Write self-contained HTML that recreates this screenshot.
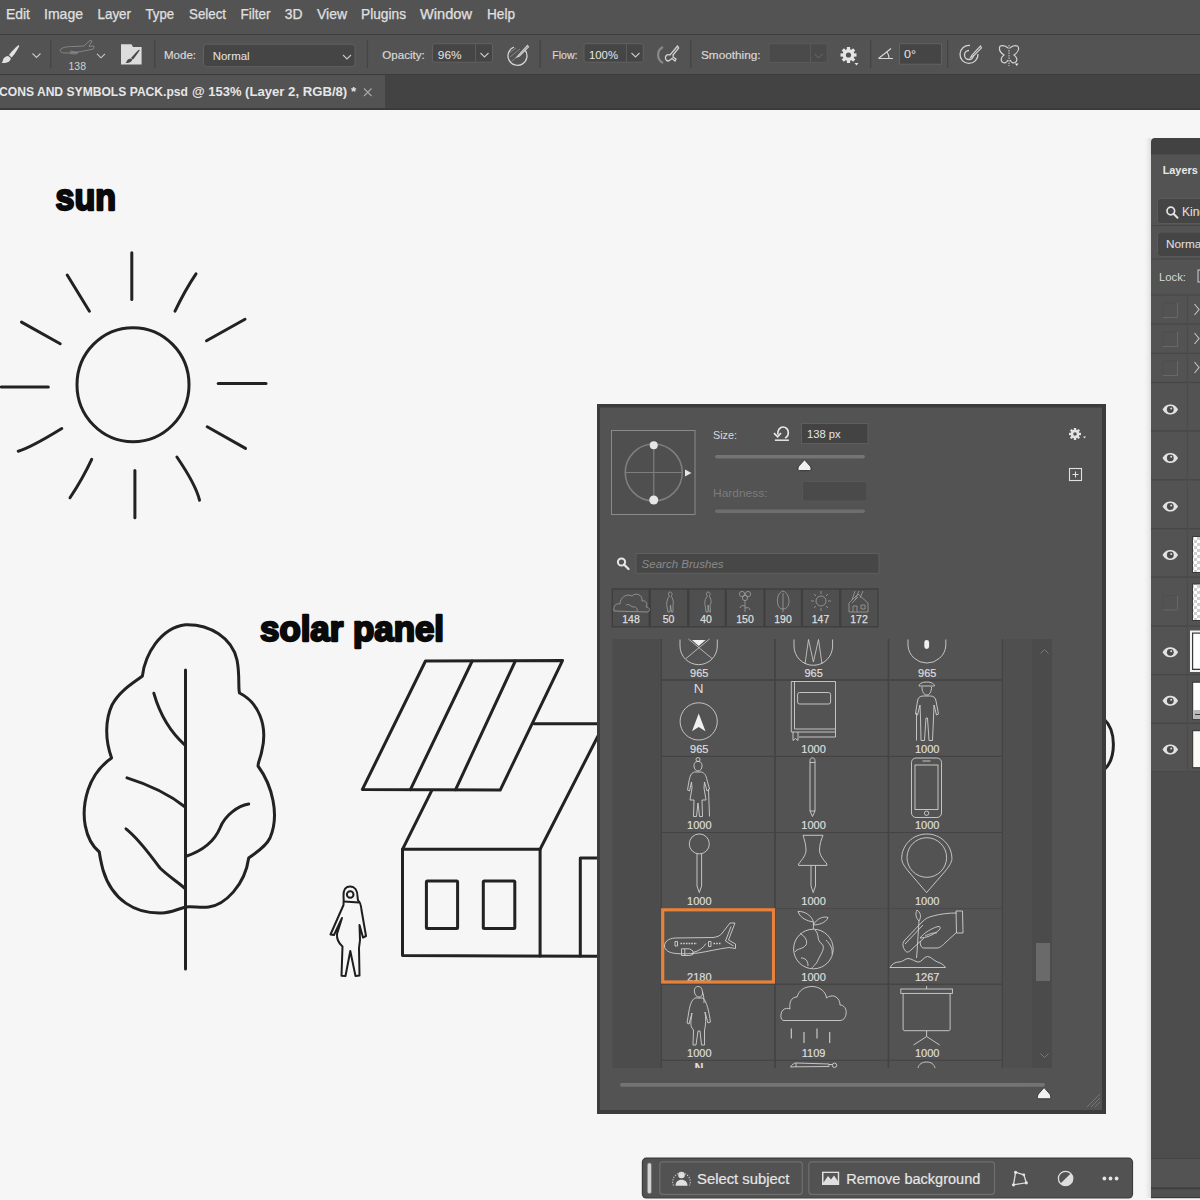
<!DOCTYPE html>
<html><head><meta charset="utf-8">
<style>
html,body{margin:0;padding:0;width:1200px;height:1200px;overflow:hidden;background:#f6f6f6}
svg{display:block}
text{font-family:"Liberation Sans",sans-serif}
</style></head><body>
<svg width="1200" height="1200" viewBox="0 0 1200 1200">
<rect x="0" y="0" width="1200" height="1200" fill="#f6f6f6"/>

<!-- ===== CANVAS DRAWINGS ===== -->
<g id="canvas" fill="none" stroke="#222222" stroke-width="3" stroke-linecap="round" stroke-linejoin="round">
  <!-- sun -->
  <ellipse cx="133" cy="384.7" rx="56" ry="57"/>
  <path d="M131.8 252.8 L131.8 299.5"/>
  <path d="M196 273.8 Q185 290 175 311.2"/>
  <path d="M245 319.3 L206.5 340.8"/>
  <path d="M218.2 383.5 L266 383.5"/>
  <path d="M207.2 426.7 L245.5 448.4"/>
  <path d="M176.9 457 Q196 485 199.5 500.2"/>
  <path d="M134.9 470.5 L134.9 517.7"/>
  <path d="M91.7 459.3 Q83 478 70 497.8"/>
  <path d="M61.8 428.5 Q30 448 18.2 451.2"/>
  <path d="M1.2 387 L48.3 387"/>
  <path d="M21.5 322.1 L60.2 343.8"/>
  <path d="M67.2 275 L89.4 311.2"/>
  <!-- tree -->
  <path d="M185.5 624.8 C210 624 232 638 237 660 C240 675 238 688 239.5 693 C258 702 268 725 262 750 C261 757 258 762 258 766 C272 785 280 815 270 838 C265 848 255 853 248.7 858 C245 885 225 905 208.7 907 C200 908 192 906 185.5 907 C175 910 170 913 162 913 C135 914 112 900 103 870 C101 862 100 858 99.3 852 C85 840 80 815 88 790 C93 775 103 764 111.6 758 C105 740 105 720 112 705 C120 690 135 682 142.4 676 C145 655 160 628 185.5 624.8 Z"/>
  <path d="M185.5 670 L185.5 969"/>
  <path d="M153.8 693.2 C160 715 170 732 185.5 745.6"/>
  <path d="M127 777.9 C150 785 170 795 185.5 807.2"/>
  <path d="M126 828.8 C140 840 150 855 160 868 C168 876 178 882 185.5 888.8"/>
  <path d="M185.5 856.5 C205 850 215 840 220 828 C225 815 238 806 248.7 804.1"/>
  <!-- solar panel -->
  <path d="M425.5 661 L562.6 660.4 L500.2 790.1 L362.3 789.6 Z"/>
  <path d="M472.2 661 L410.4 789.6"/>
  <path d="M515.3 661 L455.6 789.6"/>
  <!-- house -->
  <path d="M431.7 790.7 L402.5 849.3 L540.1 849.3 L598 736"/>
  <path d="M534.3 723.7 L598 723.7"/>
  <path d="M402.5 849.3 L402.5 955.5 L598 956.3"/>
  <path d="M540.1 849.3 L540.1 956"/>
  <path d="M598 858 L580.3 858 L580.3 956"/>
  <rect x="426.4" y="881.1" width="31.2" height="47.5" rx="1"/>
  <rect x="483.3" y="881.1" width="31.5" height="47.5" rx="1"/>
  <!-- arc right of panel -->
  <path d="M1104 719 C1116 730 1117 758 1104 770"/>
</g>
<g fill="none" stroke="#1e1e1e" stroke-width="2" stroke-linejoin="round">
  <!-- person -->
  <path d="M350 886.5 C355 886.5 357.5 891 357.5 896.5 L358 900.5 C360.5 902 361 905 361.5 910 L366 936 L363 937.5 L359.5 925 L360 940 L359 948 L359.5 975.5 L355.5 976 L350.3 951 L345.5 976 L341.5 975.7 L342.5 946.5 C338.5 943 336.5 940 337 934 L342 918 L334 935 L330.5 934.5 L343.5 905 C343.5 902 344 900 343.5 896.5 C343 890 345.5 886.5 350 886.5 Z"/>
  <circle cx="350.2" cy="894.5" r="3.3"/>
  <path d="M344 901.5 L359 902.5"/>
</g>
<text x="55.5" y="210.3" font-size="36.5" font-weight="bold" fill="#0a0a0a" textLength="60.5" lengthAdjust="spacingAndGlyphs" stroke="#0a0a0a" stroke-width="2.3" stroke-linejoin="round">sun</text>
<text x="260" y="640.6" font-size="35" font-weight="bold" fill="#0a0a0a" textLength="184" lengthAdjust="spacingAndGlyphs" stroke="#0a0a0a" stroke-width="2.3" stroke-linejoin="round">solar panel</text>

<!-- ===== MENU BAR ===== -->
<rect x="0" y="0" width="1200" height="34" fill="#535353"/>
<rect x="0" y="34" width="1200" height="1" fill="#3d3d3d"/>
<g fill="#e0e0e0" font-size="14.5" stroke="#e0e0e0" stroke-width="0.25">
  <text x="6" y="19.1" textLength="24" lengthAdjust="spacingAndGlyphs">Edit</text>
  <text x="44" y="19.1" textLength="39" lengthAdjust="spacingAndGlyphs">Image</text>
  <text x="97.5" y="19.1" textLength="33.5" lengthAdjust="spacingAndGlyphs">Layer</text>
  <text x="145.5" y="19.1" textLength="28.5" lengthAdjust="spacingAndGlyphs">Type</text>
  <text x="189" y="19.1" textLength="37" lengthAdjust="spacingAndGlyphs">Select</text>
  <text x="240.5" y="19.1" textLength="30" lengthAdjust="spacingAndGlyphs">Filter</text>
  <text x="284.7" y="19.1" textLength="17.8" lengthAdjust="spacingAndGlyphs">3D</text>
  <text x="317" y="19.1" textLength="30" lengthAdjust="spacingAndGlyphs">View</text>
  <text x="361" y="19.1" textLength="45" lengthAdjust="spacingAndGlyphs">Plugins</text>
  <text x="420" y="19.1" textLength="52" lengthAdjust="spacingAndGlyphs">Window</text>
  <text x="487" y="19.1" textLength="28" lengthAdjust="spacingAndGlyphs">Help</text>
</g>

<!-- ===== OPTIONS BAR ===== -->
<rect x="0" y="35" width="1200" height="39" fill="#535353"/>
<rect x="0" y="74" width="1200" height="1" fill="#3b3b3b"/>
<g id="opts">
  <!-- separators -->
  <g fill="#444444">
    <rect x="50" y="40" width="1.3" height="28"/>
    <rect x="154.2" y="40" width="1.3" height="28"/>
    <rect x="366.8" y="40" width="1.3" height="28"/>
    <rect x="539.5" y="40" width="1.3" height="28"/>
    <rect x="690.2" y="40" width="1.3" height="28"/>
    <rect x="870" y="40" width="1.3" height="28"/>
    <rect x="947" y="40" width="1.3" height="28"/>
  </g>
  <!-- brush tool icon -->
  <path d="M18.5 45 C16 47 11 52 9 55 L11.5 57.5 C14 55.5 17.5 49.5 19.3 46 Z" fill="#e2e2e2"/>
  <path d="M8 56 C5 56.5 3.5 58 3 60 C2.7 61.5 2.2 62.5 1.5 63 C4.5 63.3 8.5 62.5 10 60.5 C10.8 59.5 10.8 58 10.2 57.5 Z" fill="#e2e2e2"/>
  <!-- airplane brush thumb -->
  <g fill="none" stroke="#8a8a8a" stroke-width="0.9">
    <path d="M60 50 C62 47 68 46.5 74 46.5 L84 46 L90 40.5 L92 41 L89 46.5 L94 46 L93.5 49 L86 50.5 C80 52 72 53 66 53 C62 53 60 52 60 50 Z"/>
    <path d="M70 51 L78 52.5 L76 54 L70 53.5"/>
  </g>
  <text x="68.5" y="70.3" font-size="10.5" fill="#d0d0d0" textLength="17.5" lengthAdjust="spacingAndGlyphs">138</text>
  <!-- folder brush icon -->
  <path d="M121 44.3 L131.5 44.3 L133 47 L141.6 47 L141.6 64.6 L121 64.6 Z" fill="#dcdcdc"/>
  <path d="M139 49.5 C137 51.5 133 55.5 131 58 L132.8 59.7 C135 57.5 138.5 52 139.8 50.2 Z" fill="#4a4a4a"/>
  <path d="M130.3 58.6 C128.3 59 127.2 60 126.8 61.2 C126.5 62 126 62.6 125.5 63 C127.8 63.2 130.5 62.5 131.6 61 C132.2 60.3 132.1 59.5 131.8 59.2 Z" fill="#4a4a4a"/>
  <!-- text labels -->
  <g fill="#d8d8d8" font-size="11.8" stroke="#d8d8d8" stroke-width="0.2">
    <text x="164" y="59" textLength="32" lengthAdjust="spacingAndGlyphs">Mode:</text>
    <text x="382.3" y="58.7" textLength="42.4" lengthAdjust="spacingAndGlyphs">Opacity:</text>
    <text x="552.3" y="58.7" textLength="25.2" lengthAdjust="spacingAndGlyphs">Flow:</text>
    <text x="701" y="58.7" textLength="59.5" lengthAdjust="spacingAndGlyphs">Smoothing:</text>
  </g>
  <!-- mode dropdown -->
  <rect x="203.5" y="44.2" width="151.5" height="22.5" rx="3" fill="#454545" stroke="#616161" stroke-width="1"/>
  <text x="212.7" y="59.7" font-size="11.8" fill="#e6e6e6" textLength="37" lengthAdjust="spacingAndGlyphs">Normal</text>
  <!-- opacity input -->
  <rect x="432.5" y="43.7" width="60" height="18.5" rx="2" fill="#454545" stroke="#616161" stroke-width="1"/>
  <rect x="475" y="44.2" width="1" height="17.5" fill="#5c5c5c"/>
  <text x="437.8" y="58.5" font-size="11.8" fill="#e6e6e6" textLength="23.7" lengthAdjust="spacingAndGlyphs">96%</text>
  <!-- flow input -->
  <rect x="584" y="43.7" width="59.2" height="18.5" rx="2" fill="#454545" stroke="#616161" stroke-width="1"/>
  <rect x="626" y="44.2" width="1" height="17.5" fill="#5c5c5c"/>
  <text x="589" y="58.5" font-size="11.8" fill="#e6e6e6" textLength="29" lengthAdjust="spacingAndGlyphs">100%</text>
  <!-- smoothing input (disabled) -->
  <rect x="769" y="43.7" width="58.2" height="18.8" rx="2" fill="#4a4a4a" stroke="#595959" stroke-width="1"/>
  <rect x="810" y="44.2" width="1" height="17.8" fill="#595959"/>
  <path d="M814.5 54 L818.5 58 L822.5 54" fill="none" stroke="#6a6a6a" stroke-width="1"/>
  <!-- pressure opacity icon -->
  <g fill="none" stroke="#d2d2d2" stroke-width="1.3">
    <path d="M525 50 A9.5 9.5 0 1 1 514 47"/>
    <path d="M510 57 L520 49 M512 61 L523 52 M509 53 L516 48" stroke-width="0.7" stroke="#9a9a9a"/>
    <path d="M527.5 45.5 L519 54.5 L517 57 L519.5 56 L528.5 47 Z" stroke-width="1.1"/>
  </g>
  <!-- airbrush icon -->
  <g fill="none" stroke="#d2d2d2" stroke-width="1.3">
    <path d="M663 47 A9 9 0 0 0 663 63" stroke="#8a8a8a" stroke-width="2.2"/>
    <path d="M677.5 46 L670 55 C668 54 666 55 665.5 57 C665 59 666.5 61 668.5 61 L672 58.5 L675 61 L676 59 L673 57 C673.5 56 673.5 55.5 673 55 L678.7 48 Z"/>
  </g>
  <!-- gear icon -->
  <g transform="translate(848.5 55)">
    <circle r="6" fill="#e4e4e4"/>
    <g fill="#e4e4e4">
      <rect x="-1.6" y="-8" width="3.2" height="16"/>
      <rect x="-1.6" y="-8" width="3.2" height="16" transform="rotate(45)"/>
      <rect x="-1.6" y="-8" width="3.2" height="16" transform="rotate(90)"/>
      <rect x="-1.6" y="-8" width="3.2" height="16" transform="rotate(135)"/>
    </g>
    <circle r="2.6" fill="#535353"/>
  </g>
  <path d="M854.5 63 L858.5 63 L856.5 65.5 Z" fill="#e4e4e4"/>
  <!-- angle icon -->
  <path d="M878.5 58.5 L893 58.5 M878.5 58.5 L891 48.5 M887 52 C888.5 54 889 56 889 58.5" fill="none" stroke="#d8d8d8" stroke-width="1.2"/>
  <!-- angle input -->
  <rect x="899.5" y="43.7" width="42" height="20.5" fill="#454545" stroke="#616161" stroke-width="1"/>
  <text x="904" y="58.3" font-size="11.8" fill="#e6e6e6" textLength="12" lengthAdjust="spacingAndGlyphs">0°</text>
  <!-- target pen icon -->
  <g fill="none" stroke="#d2d2d2" stroke-width="1.3">
    <path d="M978 54 A9 9 0 1 1 970 45.5"/>
    <path d="M973.5 55 A4.5 4.5 0 1 1 969 50.5"/>
    <path d="M980.5 46 L972 55 L970.5 57.5 L973 56.5 L981.5 48 Z" stroke-width="1.1"/>
  </g>
  <!-- butterfly symmetry icon -->
  <g fill="none" stroke="#d2d2d2" stroke-width="1.2">
    <path d="M1008 48 C1005 45 1000 45 999.5 47.5 C999 50 1001 53 1004 55 C1001 57 1000 61 1003 62.5 C1005 63.5 1007 62 1008 60"/>
    <path d="M1010 48 C1013 45 1018 45 1018.5 47.5 C1019 50 1017 53 1014 55 C1017 57 1018 61 1015 62.5 C1013 63.5 1011 62 1010 60"/>
    <path d="M1009 45 L1009 66" stroke-dasharray="1.5 1" stroke-width="1"/>
  </g>
  <path d="M1015 63.5 L1018.5 63.5 L1016.7 66 Z" fill="#e4e4e4"/>
  <g fill="none" stroke="#c8c8c8" stroke-width="1.1">
    <path d="M32.5 53.5 L36.5 57.5 L40.5 53.5"/>
    <path d="M97 53.8 L101 57.8 L105 53.8"/>
    <path d="M343 55 L347 59 L351 55"/>
    <path d="M480.5 53 L484.5 57 L488.5 53"/>
    <path d="M631.5 53 L635.5 57 L639.5 53"/>
  </g>
</g>

<!-- ===== TAB BAR ===== -->
<rect x="0" y="75" width="1200" height="33" fill="#434343"/>
<rect x="0" y="75" width="385" height="33" fill="#535353"/>
<rect x="0" y="108" width="1200" height="2" fill="#3a3a3a"/>
<g font-size="13.5" font-weight="bold" fill="#e6e6e6">
<text x="-1" y="96" textLength="189" lengthAdjust="spacingAndGlyphs">CONS AND SYMBOLS PACK.psd</text>
<text x="192" y="96" textLength="49.5" lengthAdjust="spacingAndGlyphs">@ 153%</text>
<text x="245" y="96" textLength="111" lengthAdjust="spacingAndGlyphs">(Layer 2, RGB/8) *</text>
</g>
<path d="M364 88.5 L371.5 96 M371.5 88.5 L364 96" stroke="#a8a8a8" stroke-width="1.1"/>

<!-- ===== BRUSH PANEL ===== -->
<rect x="597" y="404" width="509" height="710" fill="#3c3c3c"/>
<rect x="600" y="407.5" width="502" height="702.5" fill="#535353"/>
<g id="bp">
  <!-- preview -->
  <rect x="611.5" y="430.5" width="83.5" height="84" fill="#4f4f4f" stroke="#8a8a8a" stroke-width="1"/>
  <g fill="none" stroke="#7e7e7e" stroke-width="1.6">
    <circle cx="653.75" cy="472.5" r="28.5"/>
    <path d="M653.75 445 L653.75 500 M625.3 472.5 L682.2 472.5" stroke-width="1.2"/>
  </g>
  <circle cx="653.75" cy="445.3" r="4" fill="#e6e6e6"/>
  <circle cx="653.75" cy="500" r="4.5" fill="#e6e6e6"/>
  <path d="M685 469.5 L691.5 473 L685 476.5 Z" fill="#e6e6e6"/>
  <!-- size -->
  <text x="713" y="438.8" font-size="11.3" fill="#d8d8d8" textLength="24" lengthAdjust="spacingAndGlyphs">Size:</text>
  <g fill="none" stroke="#e8e8e8" stroke-width="1.7">
    <path d="M777.8 434.5 C777.5 430 780 427 783 427 C786 427 788.3 429.5 788.3 432.5 C788.3 435.3 786.8 437.3 785 438"/>
    <path d="M774 433.2 L777.6 436.8 L781 433" stroke-linejoin="miter"/>
    <path d="M774.9 440.2 L788.9 440.2" stroke-width="1.5"/>
  </g>
  <rect x="801.5" y="423.5" width="66.5" height="20" fill="#434343" stroke="#5e5e5e" stroke-width="1"/>
  <text x="807" y="438.3" font-size="11.3" fill="#e6e6e6" textLength="33.7" lengthAdjust="spacingAndGlyphs">138 px</text>
  <rect x="715" y="455" width="150" height="3.6" rx="1.8" fill="#747474"/>
  <path d="M804.5 459.8 L809.9 465.8 Q811 467 811 468.2 L811 469.3 Q811 470.6 809.6 470.6 L799.4 470.6 Q798 470.6 798 469.3 L798 468.2 Q798 467 799.1 465.8 Z" fill="#f0f0f0" stroke="#2c2c2c" stroke-width="0.9"/>
  <!-- hardness -->
  <text x="713" y="497" font-size="11.3" fill="#7c7c7c" textLength="54.5" lengthAdjust="spacingAndGlyphs">Hardness:</text>
  <rect x="802.5" y="481.5" width="64.5" height="19.5" fill="#4a4a4a" stroke="#575757" stroke-width="1"/>
  <rect x="715" y="509.5" width="150" height="3.6" rx="1.8" fill="#6e6e6e"/>
  <!-- gear + new -->
  <g transform="translate(1075 434)">
    <circle r="4.3" fill="#e4e4e4"/>
    <g fill="#e4e4e4">
      <rect x="-1.2" y="-6" width="2.4" height="12"/>
      <rect x="-1.2" y="-6" width="2.4" height="12" transform="rotate(45)"/>
      <rect x="-1.2" y="-6" width="2.4" height="12" transform="rotate(90)"/>
      <rect x="-1.2" y="-6" width="2.4" height="12" transform="rotate(135)"/>
    </g>
    <circle r="1.8" fill="#535353"/>
  </g>
  <path d="M1083 436.5 L1086 436.5 L1084.5 438.5 Z" fill="#e4e4e4"/>
  <rect x="1069.5" y="468.5" width="12" height="12" fill="none" stroke="#e0e0e0" stroke-width="1.1"/>
  <path d="M1075.5 471.5 L1075.5 477.5 M1072.5 474.5 L1078.5 474.5" stroke="#e0e0e0" stroke-width="1.1"/>
  <!-- search -->
  <circle cx="621.5" cy="562" r="3.6" fill="none" stroke="#e6e6e6" stroke-width="2"/>
  <path d="M624 564.5 L628.5 569" stroke="#e6e6e6" stroke-width="2.3" stroke-linecap="round"/>
  <rect x="636" y="553.5" width="243" height="19.8" fill="#474747" stroke="#5e5e5e" stroke-width="1"/>
  <text x="641.6" y="567.8" font-size="11.3" font-style="italic" fill="#8a8a8a" textLength="82" lengthAdjust="spacingAndGlyphs">Search Brushes</text>
  <!-- recent strip -->
  <rect x="611.6" y="588.3" width="267" height="39.2" fill="#3f3f3f"/>
  <g fill="#4f4f4f">
    <rect x="613" y="589.8" width="35.5" height="36.3"/>
    <rect x="651" y="589.8" width="36" height="36.3"/>
    <rect x="689.5" y="589.8" width="35.2" height="36.3"/>
    <rect x="727" y="589.8" width="36.3" height="36.3"/>
    <rect x="765.5" y="589.8" width="35.3" height="36.3"/>
    <rect x="803" y="589.8" width="36" height="36.3"/>
    <rect x="841.3" y="589.8" width="36" height="36.3"/>
  </g>
  <g fill="#dedede" font-size="10.5" text-anchor="middle" stroke="#dedede" stroke-width="0.25">
    <text x="631" y="623.4">148</text>
    <text x="668.5" y="623.4">50</text>
    <text x="706" y="623.4">40</text>
    <text x="745" y="623.4">150</text>
    <text x="783" y="623.4">190</text>
    <text x="820.5" y="623.4">147</text>
    <text x="859" y="623.4">172</text>
  </g>
  <!-- strip icons -->
  <g fill="none" stroke="#a0a0a0" stroke-width="0.8">
    <path d="M614 611 C613 606 616 603 620 604 C620 598 626 593 632 596 C636 592 643 595 642 601 C646 600 648 604 646 607 C650 607 650 611 648 612 Z"/>
    <path d="M626 605 C628 604 631 605 632 607 C636 606 638 609 637 611"/>
    <path d="M670 592 C668 592 668 595 669.5 596 C667 598 666 604 667 607 L668 612 L670 612 L670.5 605 L671.5 612 L673 612 L673 605 C674 603 673 598 671 596 C673 595 672 592 670 592 Z"/>
    <path d="M708 592 C706 592 706 595 707.5 596 C705 598 704 604 705.5 607 L706 612 L708 612 L708 605 L709 612 L710.5 612 L710 605 C712 603 711 598 709 596 C711 595 710 592 708 592 Z"/>
    <circle cx="742" cy="594" r="2.6"/><circle cx="748" cy="594" r="2.6"/><circle cx="745" cy="598" r="2.6"/>
    <path d="M745 600 L745 612 M745 606 C742 605 740 606 740 608 M745 608 C748 607 750 608 750 610"/>
    <path d="M783 591 C779 592 777 597 777.5 602 C778 607 780 609 783 609 C786 609 788.5 607 789 602 C789 597 787 592 783 591 Z M783 593 L783 612"/>
    <circle cx="821" cy="601" r="5"/>
    <path d="M821 591 L821 594 M821 608 L821 611 M811 601 L814 601 M828 601 L831 601 M814 594 L816 596 M826 606 L828 608 M828 594 L826 596 M814 608 L816 606"/>
    <path d="M849 612 L849 603 L858 594 L868 603 L868 612 Z M852 603 L858 597 M855 591 L852 600 M859 591 L855 600 M863 591 L860 598 M853 612 L853 606 L857 606 L857 612 M861 605 L865 605 L865 609 L861 609 Z"/>
  </g>
  <!-- ===== BRUSH GRID ===== -->
  <rect x="612.5" y="639" width="439.5" height="429" fill="#4c4c4c"/>
  <rect x="1002.5" y="639" width="30" height="429" fill="#4f4f4f"/>
  <rect x="1032.5" y="639" width="19.5" height="429" fill="#4b4b4b"/>
  <rect x="660.8" y="639" width="342" height="429" fill="#434343"/>
  <g fill="#535353">
    <!-- rows: -1..5 -->
    <rect x="662" y="639" width="112.2" height="40.2"/>
    <rect x="775.8" y="639" width="111.8" height="40.2"/>
    <rect x="889.2" y="639" width="112.5" height="40.2"/>
    <rect x="662" y="680.8" width="112.2" height="75"/>
    <rect x="775.8" y="680.8" width="111.8" height="75"/>
    <rect x="889.2" y="680.8" width="112.5" height="75"/>
    <rect x="662" y="757" width="112.2" height="75"/>
    <rect x="775.8" y="757" width="111.8" height="75"/>
    <rect x="889.2" y="757" width="112.5" height="75"/>
    <rect x="662" y="833" width="112.2" height="75"/>
    <rect x="775.8" y="833" width="111.8" height="75"/>
    <rect x="889.2" y="833" width="112.5" height="75"/>
    <rect x="662" y="908.6" width="112.2" height="75"/>
    <rect x="775.8" y="908.6" width="111.8" height="75"/>
    <rect x="889.2" y="908.6" width="112.5" height="75"/>
    <rect x="662" y="984.8" width="112.2" height="75"/>
    <rect x="775.8" y="984.8" width="111.8" height="75"/>
    <rect x="889.2" y="984.8" width="112.5" height="75"/>
    <rect x="662" y="1060.8" width="112.2" height="7.2"/>
    <rect x="775.8" y="1060.8" width="111.8" height="7.2"/>
    <rect x="889.2" y="1060.8" width="112.5" height="7.2"/>
  </g>
  <!-- scrollbar -->
  <path d="M1040.5 653.5 L1044.5 649.5 L1048.5 653.5" fill="none" stroke="#7a7a7a" stroke-width="1"/>
  <path d="M1040.5 1053.5 L1044.5 1057.5 L1048.5 1053.5" fill="none" stroke="#7a7a7a" stroke-width="1"/>
  <rect x="1036" y="943" width="14" height="38" fill="#6a6a6a"/>
  <!-- labels -->
  <g fill="#dedede" font-size="11" text-anchor="middle" stroke="#dedede" stroke-width="0.2">
    <text x="699.3" y="677">965</text><text x="813.6" y="677">965</text><text x="927.2" y="677">965</text>
    <text x="699.3" y="753">965</text><text x="813.6" y="753">1000</text><text x="927.2" y="753">1000</text>
    <text x="699.3" y="829">1000</text><text x="813.6" y="829">1000</text><text x="927.2" y="829">1000</text>
    <text x="699.3" y="905">1000</text><text x="813.6" y="905">1000</text><text x="927.2" y="905">1000</text>
    <text x="699.3" y="980.5">2180</text><text x="813.6" y="980.5">1000</text><text x="927.2" y="980.5">1267</text>
    <text x="699.3" y="1056.5">1000</text><text x="813.6" y="1056.5">1109</text><text x="927.2" y="1056.5">1000</text>
  </g>
  <rect x="662.7" y="909.8" width="110.8" height="72.2" fill="none" stroke="#e8823a" stroke-width="3.2"/>
  <!-- grid icons -->
  <g fill="none" stroke="#d0d0d0" stroke-width="0.9">
    <!-- row -1 -->
    <path d="M680 646 A18.6 18.6 0 0 0 717.3 646 L717.3 639.5 M680 646 L680 639.5"/>
    <path d="M688.5 639 L712 658.5 M709.5 639 L686 658.5" stroke-width="0.8"/>
    <path d="M794 646 A19.2 19.2 0 0 0 832.6 646 L832.6 639.5 M794 646 L794 639.5"/>
    <path d="M808.5 639.5 L805 664 M818.5 639.5 L822 664 M808.5 639.5 L813.4 662 L818.5 639.5" stroke-width="0.8"/>
    <path d="M908 646 A19 19 0 0 0 945.8 646 L945.8 639.5 M908 646 L908 639.5"/>
    <!-- row 0 -->
    <circle cx="698.7" cy="721.4" r="18.6"/>
    <path d="M791.3 681.5 L835.5 681.5 L835.5 737 L799 737 M791.3 681.5 L791.3 732 L835.5 732 M794.5 681.5 L794.5 729 L835.5 729 M793 732 L793 740.5 L795.5 738.5 L798 740.5 L798 732"/>
    <rect x="797.6" y="692.5" width="33" height="11.5" rx="2"/>
    <path d="M926.8 682 C922 682 919 684 919 686 L934.5 686 C934.5 684 931.5 682 926.8 682 Z M922 687 C922 692 924 695 926.8 695 C929.5 695 931.5 692 931.5 687"/>
    <path d="M923 696 L930.5 696 C934 696 935.5 698 936 701 L938.5 714 L936.5 715 L934 705 L933.5 718 L932.5 740.5 L929 740.5 L927.5 718 L926 718 L924.5 740.5 L921 740.5 L920.5 718 L920 705 L917.5 715 L915.5 714 L917.5 701 C918 698 919.5 696 923 696 Z M916.5 713 L916.5 740.5"/>
    <!-- row 1 -->
    <circle cx="698" cy="759.5" r="2"/>
    <path d="M698 761.5 C694.5 761.5 694 764 694 766 C694 769 696 771 698 771 C700 771 702 769 702 766 C702 764 701.5 761.5 698 761.5 Z"/>
    <path d="M694.5 772 C691 773 690 776 689 781 L687.5 790 L689.5 791 L691.5 782 L692 788 L690 800 L694 800 L693.5 816.5 L696.5 816.5 L698 803 L699.5 816.5 L702.5 816.5 L702 800 L706 800 L704 788 L704.5 782 L707 791 L709.5 789 L707 780 C706 775 704.5 773 701.5 772 Z M708.5 789 L709.5 816.5"/>
    <path d="M810 760.5 C810 758.5 811.5 757.8 812.5 757.8 C813.5 757.8 815 758.5 815 760.5 L815 811 L812.5 816.5 L810 811 Z M810 762.5 L815 762.5 M810 811 L815 811"/>
    <rect x="911.5" y="758" width="30" height="59.5" rx="4.5"/>
    <rect x="915" y="765" width="23" height="44.5"/>
    <path d="M922.5 761 L930.5 761"/>
    <circle cx="926.6" cy="813.2" r="2.2"/>
    <!-- row 2 -->
    <circle cx="699.3" cy="843.9" r="10"/>
    <path d="M697 854 L697 886 L699.3 892.6 L701.6 886 L701.6 854"/>
    <path d="M803 835.3 L823 835.3 C821 840 819.5 845 819.5 850 C819.5 855 823 859 826.9 864 L826.9 865.4 L798.5 865.4 L798.5 864 C802.5 859 806 855 806 850 C806 845 804.5 840 803 835.3 Z M811 865.4 L811 886 L813.2 892.6 L815.5 886 L815.5 865.4"/>
    <path d="M926.6 892.6 L909 872 C903 865 901.7 861 901.7 858.6 C901.7 845 912.8 834 926.8 834 C940.8 834 951.9 845 951.9 858.6 C951.9 861 950.5 865 944.5 872 Z"/>
    <circle cx="926.8" cy="857.5" r="19.8"/>
    <!-- row 3 airplane -->
    <path d="M664.5 946 C664.5 942 668 938.5 675 938 L713 937.5 C717 937 719.5 936 721.5 934 L730 923 L735 923 L728.5 940 L735.5 944 L735.5 948.5 L729 947.5 C720 948.5 708 951.5 698 953 C690 954 682 954 676 953.5 C669 953 664.5 950 664.5 946 Z"/>
    <path d="M731 926.5 L725.5 941 L733.5 946"/>
    <path d="M681.5 948.8 L689.5 948.8 L693 951 L693 954.5 L689.5 955.5 L681.5 955.5 Z M684.8 948.8 L684.8 955.5 M693 952.5 C699 951 703 948 706 943.5"/>
    <path d="M675 941.5 L677.5 941.5 L677.5 946 L675 946 Z M708.5 941.5 L711 941.5 L711 946.5 L708.5 946.5 Z"/>
    <path d="M680.5 943.5 L697 943.5 M713.5 943.5 L721 943.5" stroke-dasharray="1.6 1.1" stroke-width="1.4"/>
    <!-- earth -->
    <circle cx="813.4" cy="949" r="19.8"/>
    <path d="M800 933.5 C805 936 808 941 806 945 C802 950 797 948 795 952 M815 930 C820 935 816 940 822 944 C826 948 820 955 818 960 C816 965 813 966 812 968 M826 940 C830 944 833 949 832 954 M801 958 C805 958 808 960 808 966"/>
    <path d="M813.4 929 L813.4 922 C812 916 805 911 798 911.5 C800 918 807 921 813.4 922 M813.4 925 C817 918 824 916 828 917.5 C826 923 818 925 813.4 925"/>
    <!-- hand planting -->
    <path d="M890 967.5 C892 964 895 962 899 962 C903 962 905 958.5 908 958.5 C912 958.5 915 962 918.5 962 C922 962 924 956.5 927.5 956.5 C931 956.5 934 961 937.5 962 C941 963 944 965 945.5 967.5 Z"/>
    <path d="M919 921 C918 935 917.5 948 916.5 958 M919 921 C916 918 915 914 917 910 C920 912 922 916 919 921"/>
    <path d="M956.5 913 C948 913 940 914 933 916 C928 917 925 919 922 922 L904 941 C902 944 903 948 905.5 951 C907 953 909 952 911 950 L924 938 M905 944 L923 925"/>
    <path d="M920.5 941 C920 945 921 948 924 948 L937 948 C940 948 943 945 946 942 L957 932"/>
    <path d="M920 938 C924 933 932 928 938 926.5 C941 926 941 929 938 931 C933 935 926 938 920 938 M925 936 C929 934 935 932 937 933"/>
    <path d="M956 911 L962.5 911 L963 933 L956.5 933 Z"/>
    <!-- row 4 woman -->
    <path d="M698.5 986.5 C695 986.5 694 989 694.5 992 C695 995 696.5 997 699 997 C701.5 997 703 995 702.5 992 C702 989 701.5 986.5 698.5 986.5 Z M702.5 992 C704 996 704 1000 704 1003"/>
    <path d="M695 998 C691.5 1000 690 1005 689 1011 L687 1023 L689 1024 L692 1013 C691 1020 690 1025 692 1028 L693.5 1030 L693 1045 L696 1045 L698 1031 L700 1031 L701.5 1045 L704.5 1045 L704.5 1030 C706 1025 706 1018 705 1012 L708 1023 L710.5 1022 C709 1012 707 1002 703 998 Z"/>
    <!-- cloud -->
    <path d="M784 1020.5 C780 1020.5 780 1013 783 1010 C785 1008 788 1008 790 1009 C789 1003 791 997 797 997 C799 990 805 986.5 812 986.5 C820 986.5 826 992 826.5 998 C829 996 833 995 836 997 C839 999 840 1002 840 1005 C844 1005 847 1009 846 1014 C845.5 1018 843 1020.5 840 1020.5 Z"/>
    <path d="M791.3 1028.5 L791.3 1038.5 M804 1032 L804 1043 M817 1028.5 L817 1038.5 M829.7 1032 L829.7 1043" stroke-width="1.1"/>
    <!-- projector -->
    <rect x="900.8" y="989" width="51.6" height="4.4"/>
    <path d="M903.1 993.4 L903.1 1029 C903.1 1030.5 904 1030.7 905 1030.7 L948.5 1030.7 C949.5 1030.7 950.1 1030.5 950.1 1029 L950.1 993.4"/>
    <path d="M926.6 1030.7 L926.6 1036.5 M913.5 1045 L926.6 1036.5 L939.7 1045 M926.6 986 L926.6 989"/>
    <!-- row 5 partial -->
    <path d="M790.5 1067 C792 1064.5 794 1063 796 1063 L829 1064 L829 1066.5 L796 1066.8 Z M796 1063 L796 1067 M829 1064.5 L832.5 1064.5"/>
    <circle cx="834.5" cy="1065.3" r="2.2"/>
    <path d="M918 1068 C919 1064 922 1062 926.6 1062 C931 1062 934 1064 935 1068"/>
  </g>
  <path d="M692 731.2 L698.7 713.5 L705.5 731.2 L698.7 727 Z" fill="#f0f0f0"/>
  <path d="M692 640 L705.5 640 L698.7 646 Z" fill="#f0f0f0"/>
  <rect x="924.3" y="640" width="4.8" height="9" rx="2.4" fill="#f0f0f0"/>
  <text x="698.7" y="692.5" font-size="13.5" fill="#dcdcdc" text-anchor="middle">N</text>
  <clipPath id="gclip"><rect x="612" y="1061" width="440" height="7"/></clipPath>
  <text x="699" y="1072" font-size="12.5" font-weight="bold" fill="#e0e0e0" text-anchor="middle" clip-path="url(#gclip)">N</text>
  <!-- bottom slider -->
  <rect x="620" y="1083" width="425" height="3.7" rx="1.8" fill="#747474"/>
  <path d="M1044.1 1087.5 L1049.6 1093.8 Q1050.7 1095 1050.7 1096.2 L1050.7 1097.5 Q1050.7 1098.8 1049.3 1098.8 L1038.9 1098.8 Q1037.5 1098.8 1037.5 1097.5 L1037.5 1096.2 Q1037.5 1095 1038.6 1093.8 Z" fill="#f0f0f0" stroke="#2c2c2c" stroke-width="0.9"/>
  <path d="M1087 1107 L1100 1094 M1091 1107 L1100 1098 M1095 1107 L1100 1102" stroke="#7a7a7a" stroke-width="0.9"/>
</g>

<!-- ===== LAYERS PANEL ===== -->
<defs>
  <linearGradient id="shl" x1="0" x2="1" y1="0" y2="0">
    <stop offset="0" stop-color="#f5f5f5" stop-opacity="0"/>
    <stop offset="1" stop-color="#dcdcdc" stop-opacity="1"/>
  </linearGradient>
  <pattern id="chk" x="0" y="0" width="6" height="6" patternUnits="userSpaceOnUse">
    <rect width="6" height="6" fill="#ffffff"/>
    <rect width="3" height="3" fill="#cfcfcf"/>
    <rect x="3" y="3" width="3" height="3" fill="#cfcfcf"/>
  </pattern>
</defs>
<rect x="1143" y="138" width="8" height="1060" fill="url(#shl)"/>
<path d="M1151 198 L1151 142 Q1151 138 1155 138 L1200 138 L1200 198 Z" fill="#424242"/>
<rect x="1151" y="154.5" width="49" height="1043" fill="#535353"/>
<text x="1162.7" y="174" font-size="11.5" font-weight="bold" fill="#e8e8e8" textLength="35" lengthAdjust="spacingAndGlyphs">Layers</text>
<rect x="1157.5" y="198.5" width="50" height="25" rx="3" fill="#454545" stroke="#5a5a5a" stroke-width="1"/>
<circle cx="1170.8" cy="211" r="3.8" fill="none" stroke="#e4e4e4" stroke-width="1.7"/>
<path d="M1173.5 213.7 L1177.5 217.7" stroke="#e4e4e4" stroke-width="2" stroke-linecap="round"/>
<text x="1182" y="215.5" font-size="12" fill="#e2e2e2">Kind</text>
<rect x="1151" y="225" width="49" height="1" fill="#474747"/>
<rect x="1157.5" y="232" width="50" height="24.5" rx="3" fill="#454545" stroke="#5a5a5a" stroke-width="1"/>
<text x="1166" y="248.3" font-size="11.8" fill="#e2e2e2">Normal</text>
<rect x="1151" y="258.5" width="49" height="1" fill="#474747"/>
<text x="1159" y="280.5" font-size="11.5" fill="#d8d8d8" textLength="27" lengthAdjust="spacingAndGlyphs">Lock:</text>
<rect x="1198" y="270" width="4" height="12" fill="none" stroke="#cfcfcf" stroke-width="1"/>
<!-- layer rows -->
<g fill="#474747">
  <rect x="1151" y="294.5" width="49" height="1"/>
  <rect x="1151" y="323.5" width="49" height="1.2"/>
  <rect x="1151" y="352.7" width="49" height="1.2"/>
  <rect x="1151" y="381.8" width="49" height="1.3"/>
  <rect x="1151" y="430.3" width="49" height="1.3"/>
  <rect x="1151" y="479.1" width="49" height="1.3"/>
  <rect x="1151" y="528" width="49" height="1.3"/>
  <rect x="1151" y="576.5" width="49" height="1.3"/>
  <rect x="1151" y="625.4" width="49" height="1.3"/>
  <rect x="1151" y="674" width="49" height="1.3"/>
  <rect x="1151" y="722.6" width="49" height="1.3"/>
  <rect x="1151" y="771.2" width="49" height="1.3"/>
  <rect x="1186.8" y="295" width="1.2" height="477" fill="#4c4c4c"/>
</g>
<rect x="1151" y="772.5" width="49" height="385.5" fill="#4d4d4d"/>
<rect x="1151" y="1158" width="49" height="1" fill="#444444"/>
<rect x="1151" y="1159" width="49" height="28.5" fill="#535353"/>
<rect x="1151" y="1187.5" width="49" height="2" fill="#3c3c3c"/>
<rect x="1151" y="1189.5" width="49" height="7.5" fill="#505050"/>
<rect x="1151" y="1197" width="49" height="1.2" fill="#3a3a3a"/>
<g fill="none" stroke-width="1">
  <path d="M1163 317.5 L1177.5 317.5 L1177.5 303" stroke="#686868"/>
  <path d="M1163 317 L1163 303 L1177 303" stroke="#4e4e4e"/>
  <path d="M1163 346.5 L1177.5 346.5 L1177.5 332" stroke="#686868"/>
  <path d="M1163 346 L1163 332 L1177 332" stroke="#4e4e4e"/>
  <path d="M1163 375.5 L1177.5 375.5 L1177.5 361" stroke="#686868"/>
  <path d="M1163 375 L1163 361 L1177 361" stroke="#4e4e4e"/>
  <path d="M1163 610 L1177.5 610 L1177.5 595.5" stroke="#666666"/>
  <path d="M1163 609.5 L1163 595.5 L1177 595.5" stroke="#4e4e4e"/>
  <path d="M1194.5 304 L1199 309.5 L1194.5 315 M1194.5 333 L1199 338.5 L1194.5 344 M1194.5 362 L1199 367.5 L1194.5 373" stroke="#c8c8c8" stroke-width="1.1"/>
</g>
<g id="eyes" fill="#e2e2e2">
  <g transform="translate(1170.3 409.5)"><path d="M-7.8 0 C-5 -4.5 -2.5 -5 0 -5 C2.5 -5 5 -4.5 7.8 0 C5 4.5 2.5 5 0 5 C-2.5 5 -5 4.5 -7.8 0 Z"/><circle r="3.4" fill="#4a4a4a"/><circle cx="0.9" cy="-1.1" r="1" fill="#dcdcdc"/></g>
  <g transform="translate(1170.3 457.9)"><path d="M-7.8 0 C-5 -4.5 -2.5 -5 0 -5 C2.5 -5 5 -4.5 7.8 0 C5 4.5 2.5 5 0 5 C-2.5 5 -5 4.5 -7.8 0 Z"/><circle r="3.4" fill="#4a4a4a"/><circle cx="0.9" cy="-1.1" r="1" fill="#dcdcdc"/></g>
  <g transform="translate(1170.3 506.5)"><path d="M-7.8 0 C-5 -4.5 -2.5 -5 0 -5 C2.5 -5 5 -4.5 7.8 0 C5 4.5 2.5 5 0 5 C-2.5 5 -5 4.5 -7.8 0 Z"/><circle r="3.4" fill="#4a4a4a"/><circle cx="0.9" cy="-1.1" r="1" fill="#dcdcdc"/></g>
  <g transform="translate(1170.3 555)"><path d="M-7.8 0 C-5 -4.5 -2.5 -5 0 -5 C2.5 -5 5 -4.5 7.8 0 C5 4.5 2.5 5 0 5 C-2.5 5 -5 4.5 -7.8 0 Z"/><circle r="3.4" fill="#4a4a4a"/><circle cx="0.9" cy="-1.1" r="1" fill="#dcdcdc"/></g>
  <g transform="translate(1170.3 652.3)"><path d="M-7.8 0 C-5 -4.5 -2.5 -5 0 -5 C2.5 -5 5 -4.5 7.8 0 C5 4.5 2.5 5 0 5 C-2.5 5 -5 4.5 -7.8 0 Z"/><circle r="3.4" fill="#4a4a4a"/><circle cx="0.9" cy="-1.1" r="1" fill="#dcdcdc"/></g>
  <g transform="translate(1170.3 700.8)"><path d="M-7.8 0 C-5 -4.5 -2.5 -5 0 -5 C2.5 -5 5 -4.5 7.8 0 C5 4.5 2.5 5 0 5 C-2.5 5 -5 4.5 -7.8 0 Z"/><circle r="3.4" fill="#4a4a4a"/><circle cx="0.9" cy="-1.1" r="1" fill="#dcdcdc"/></g>
  <g transform="translate(1170.3 749.5)"><path d="M-7.8 0 C-5 -4.5 -2.5 -5 0 -5 C2.5 -5 5 -4.5 7.8 0 C5 4.5 2.5 5 0 5 C-2.5 5 -5 4.5 -7.8 0 Z"/><circle r="3.4" fill="#4a4a4a"/><circle cx="0.9" cy="-1.1" r="1" fill="#dcdcdc"/></g>
</g>
<!-- thumbnails -->
<rect x="1192.5" y="536.5" width="9" height="36" fill="url(#chk)" stroke="#3a3a3a" stroke-width="1"/>
<rect x="1192.5" y="584" width="9" height="36.5" fill="url(#chk)" stroke="#3a3a3a" stroke-width="1"/>
<rect x="1190" y="630.5" width="12" height="41.5" fill="#f2f2f2"/>
<rect x="1192" y="632.5" width="10" height="37.5" fill="#3a3a3a"/>
<rect x="1193.2" y="633.7" width="9" height="35" fill="#ffffff"/>
<rect x="1192.7" y="682.2" width="9" height="37" fill="#ffffff" stroke="#2f2f2f" stroke-width="1"/>
<rect x="1193.2" y="710" width="8" height="8.7" fill="#b8b8b8"/>
<path d="M1195 714.5 L1201 714.5" stroke="#3a3a3a" stroke-width="1"/>
<rect x="1192.7" y="730.7" width="9" height="37" fill="#fbfaf5" stroke="#2f2f2f" stroke-width="1"/>

<!-- ===== TASKBAR ===== -->
<rect x="641.8" y="1157.6" width="491.3" height="41" rx="4.5" fill="#3c3c3c"/>
<rect x="643" y="1158.8" width="489" height="38.6" rx="3.5" fill="#525252"/>
<rect x="647.2" y="1162.8" width="4.4" height="31" rx="2.2" fill="#d2d2d2" stroke="#6a6a6a" stroke-width="0.8"/>
<rect x="659.8" y="1161.8" width="142.5" height="32.5" rx="3" fill="none" stroke="#6e6e6e" stroke-width="1.2"/>
<rect x="808.8" y="1161.8" width="185.7" height="32.5" rx="3" fill="none" stroke="#6e6e6e" stroke-width="1.2"/>
<g font-size="15.2" fill="#e6e6e6" stroke="#e6e6e6" stroke-width="0.2">
  <text x="697" y="1183.8" textLength="92.3" lengthAdjust="spacingAndGlyphs">Select subject</text>
  <text x="846.3" y="1183.8" textLength="134" lengthAdjust="spacingAndGlyphs">Remove background</text>
</g>
<!-- select subject icon -->
<circle cx="681.5" cy="1175" r="3.3" fill="#e0e0e0"/>
<path d="M675.5 1185.8 C675.5 1182 678 1179.8 681.5 1179.8 C685 1179.8 687.5 1182 687.5 1185.8 Z" fill="#e0e0e0"/>
<path d="M673.5 1185.5 A8.8 8.8 0 1 1 689.5 1185.5" fill="none" stroke="#c8c8c8" stroke-width="1.1" stroke-dasharray="1.3 1.3"/>
<!-- image icon -->
<rect x="822" y="1171.7" width="17.2" height="13.3" fill="#e0e0e0"/>
<path d="M823.5 1182.5 L828 1176 L831 1179.5 L834 1175.5 L837.8 1181 L837.8 1173 L823.5 1173 Z" fill="#555555"/>
<!-- polygon lasso icon -->
<path d="M1015.6 1172.3 L1023.8 1174.8 L1026.3 1182.8 L1013.5 1184.8 Z" fill="none" stroke="#dcdcdc" stroke-width="1.3"/>
<g fill="#e4e4e4"><circle cx="1015.6" cy="1172.3" r="1.6"/><circle cx="1023.8" cy="1174.8" r="1.4"/><circle cx="1026.3" cy="1182.8" r="1.6"/><circle cx="1013.5" cy="1184.8" r="1.6"/></g>
<!-- half circle -->
<circle cx="1065.6" cy="1178.5" r="7.2" fill="none" stroke="#dedede" stroke-width="1.3"/>
<path d="M1070.7 1173.4 A7.2 7.2 0 0 1 1060.5 1183.6 Z" fill="#dedede"/>
<g fill="#e4e4e4"><circle cx="1104.4" cy="1178.5" r="1.9"/><circle cx="1110.5" cy="1178.5" r="1.9"/><circle cx="1116.6" cy="1178.5" r="1.9"/></g>

</svg>
</body></html>
